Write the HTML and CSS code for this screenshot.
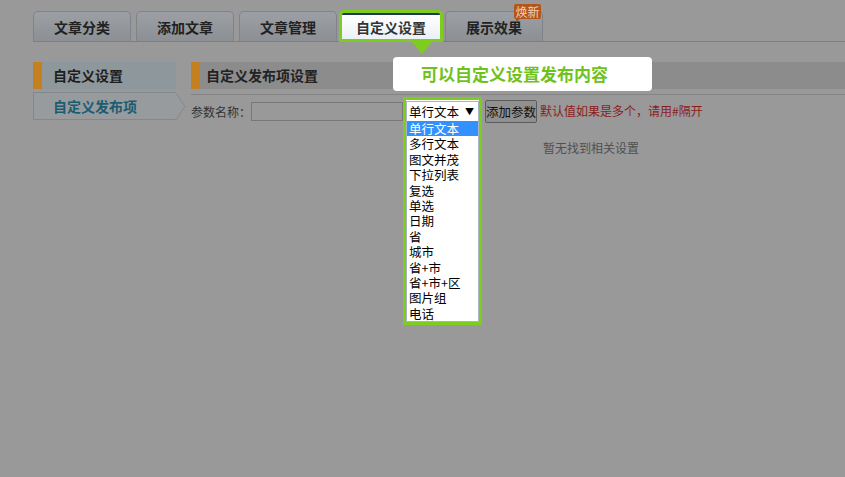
FILE: index.html
```html
<!DOCTYPE html>
<html lang="zh-CN">
<head>
<meta charset="utf-8">
<title>自定义设置</title>
<link rel="stylesheet" href="styles.css">
</head>
<body>
<div class="page">
  <nav class="tabs">
    <div class="tab">文章分类</div>
    <div class="tab">添加文章</div>
    <div class="tab">文章管理</div>
    <div class="tab tab-active">自定义设置<span class="pointer"></span></div>
    <div class="tab">展示效果<span class="badge">焕新</span></div>
  </nav>

  <div class="tip">可以自定义设置发布内容</div>

  <div class="content">
    <aside class="side">
      <div class="side-head">自定义设置</div>
      <div class="side-item">自定义发布项</div>
    </aside>
    <main class="main">
      <div class="main-top">
        <div class="main-head">自定义发布项设置</div>
      </div>
      <div class="form-row">
        <label class="label">参数名称：</label>
        <input class="input" type="text">
        <div class="select-wrap">
          <div class="select"><span>单行文本</span><span class="arrow">▼</span></div>
          <ul class="options">
            <li class="opt opt-on">单行文本</li>
            <li class="opt">多行文本</li>
            <li class="opt">图文并茂</li>
            <li class="opt">下拉列表</li>
            <li class="opt">复选</li>
            <li class="opt">单选</li>
            <li class="opt">日期</li>
            <li class="opt">省</li>
            <li class="opt">城市</li>
            <li class="opt">省+市</li>
            <li class="opt">省+市+区</li>
            <li class="opt">图片组</li>
            <li class="opt">电话</li>
          </ul>
        </div>
        <button class="btn" type="button">添加参数</button>
        <span class="hint">默认值如果是多个，请用#隔开</span>
      </div>
      <div class="empty">暂无找到相关设置</div>
    </main>
  </div>
</div>
</body>
</html>
```

FILE: styles.css
```css
html, body {
  margin: 0;
  padding: 0;
}
body {
  background: #999999;
  font-family: "Noto Sans CJK SC", "Microsoft YaHei", sans-serif;
  color: #222;
}
.page {
  position: relative;
  padding: 11px 0 0 33px;
  height: 477px;
  box-sizing: border-box;
}

/* tabs */
.tabs {
  display: flex;
  align-items: flex-start;
  gap: 5px;
  height: 30px;
  border-bottom: 1px solid #7c8084;
}
.tab {
  position: relative;
  width: 98px;
  height: 30px;
  box-sizing: border-box;
  border: 1px solid #808488;
  border-bottom: none;
  border-radius: 5px 5px 0 0;
  background: linear-gradient(#9c9fa3, #8c9094);
  display: flex;
  align-items: center;
  justify-content: center;
  font-size: 14px;
  font-weight: bold;
  color: #222;
}
.tab-active {
  height: 26px;
  margin-top: 2px;
  border: none;
  border-top: 2px solid #22355f;
  border-radius: 2px 2px 0 0;
  background: linear-gradient(#ffffff, #eaf0f5);
  box-shadow: 0 0 0 3px #7ccd1e;
  color: #333;
  z-index: 2;
}
.pointer {
  position: absolute;
  left: 70px;
  top: 27px;
  width: 0;
  height: 0;
  border-left: 10px solid transparent;
  border-right: 10px solid transparent;
  border-top: 12px solid #7ccd1e;
}
.badge {
  position: absolute;
  left: 68px;
  top: -8px;
  width: 27px;
  height: 15px;
  line-height: 15px;
  border-radius: 2px;
  background: #b3561b;
  color: #f3cfae;
  font-size: 12px;
  font-weight: normal;
  text-align: center;
}
.badge::after {
  content: "";
  position: absolute;
  left: 2px;
  bottom: -3px;
  border-top: 3px solid #b3561b;
  border-right: 4px solid transparent;
}

/* tooltip */
.tip {
  position: absolute;
  left: 393px;
  top: 57px;
  width: 259px;
  height: 34px;
  box-sizing: border-box;
  padding-left: 28px;
  border-radius: 4px;
  background: #ffffff;
  color: #6fc21b;
  font-size: 17px;
  font-weight: bold;
  line-height: 34px;
  z-index: 3;
}

/* content */
.content {
  display: flex;
  gap: 15px;
  margin-top: 20px;
}
.side {
  width: 143px;
  flex: none;
}
.side-head {
  height: 27px;
  line-height: 27px;
  border-left: 9px solid #c4801f;
  padding-left: 11px;
  background: #8e989c;
  font-size: 14px;
  font-weight: bold;
  color: #1e1e1e;
}
.side-item {
  position: relative;
  margin-top: 3px;
  height: 28px;
  box-sizing: border-box;
  border: 1px solid #7f898e;
  border-right: none;
  padding-left: 19px;
  line-height: 26px;
  background: #979b9e;
  font-size: 14px;
  font-weight: bold;
  color: #1d5b71;
}
.side-item::after {
  content: "";
  position: absolute;
  right: -9.5px;
  top: 3.5px;
  width: 19px;
  height: 19px;
  box-sizing: border-box;
  border-top: 1px solid #7f898e;
  border-right: 1px solid #7f898e;
  background: #979b9e;
  transform: scaleX(0.65) rotate(45deg);
}

.main {
  flex: 1;
}
.main-top {
  padding-bottom: 5px;
  border-bottom: 1px solid #848484;
}
.main-head {
  height: 27px;
  line-height: 27px;
  border-left: 9px solid #c4801f;
  padding-left: 6px;
  background: #8c8c8c;
  font-size: 14px;
  font-weight: bold;
  color: #222;
}

.form-row {
  display: flex;
  align-items: flex-start;
  height: 27px;
  margin-top: 2px;
}
.label {
  width: 60px;
  margin-top: 6px;
  font-size: 12px;
  line-height: 17px;
  color: #333;
}
.input {
  width: 152px;
  height: 19px;
  margin: 5px 0 0 0;
  padding: 0;
  box-sizing: border-box;
  border: 1px solid #777;
  background: #999;
}
.select-wrap {
  width: 79px;
  box-sizing: border-box;
  border: 3px solid #7ccd1e;
  padding-top: 1px;
  background: #ffffff;
  position: relative;
  z-index: 2;
}
.select {
  height: 20px;
  box-sizing: border-box;
  border: 1px solid #a8b3c4;
  border-bottom: none;
  padding: 0 4px 0 2px;
  display: flex;
  align-items: center;
  justify-content: space-between;
  font-size: 12.5px;
  color: #000;
}
.arrow {
  font-size: 9px;
}
.options {
  list-style: none;
  margin: 0;
  padding: 0;
  border: 1px solid #a8b3c4;
  border-top: none;
}
.opt {
  height: 15.4px;
  line-height: 15.4px;
  padding-left: 2px;
  font-size: 12.5px;
  color: #000;
}
.opt-on {
  background: #3390ff;
  color: #fff;
}
.btn {
  width: 52px;
  height: 23px;
  margin: 3px 0 0 3px;
  padding: 0;
  box-sizing: border-box;
  border: 1px solid #5c5c5c;
  border-radius: 2px;
  background: #909090;
  font-family: inherit;
  font-size: 12.5px;
  color: #111;
}
.hint {
  margin: 5px 0 0 3px;
  font-size: 12px;
  line-height: 17px;
  color: #8b1c1c;
}
.empty {
  margin: 15px 0 0 352px;
  font-size: 12px;
  line-height: 17px;
  color: #505050;
}
```
